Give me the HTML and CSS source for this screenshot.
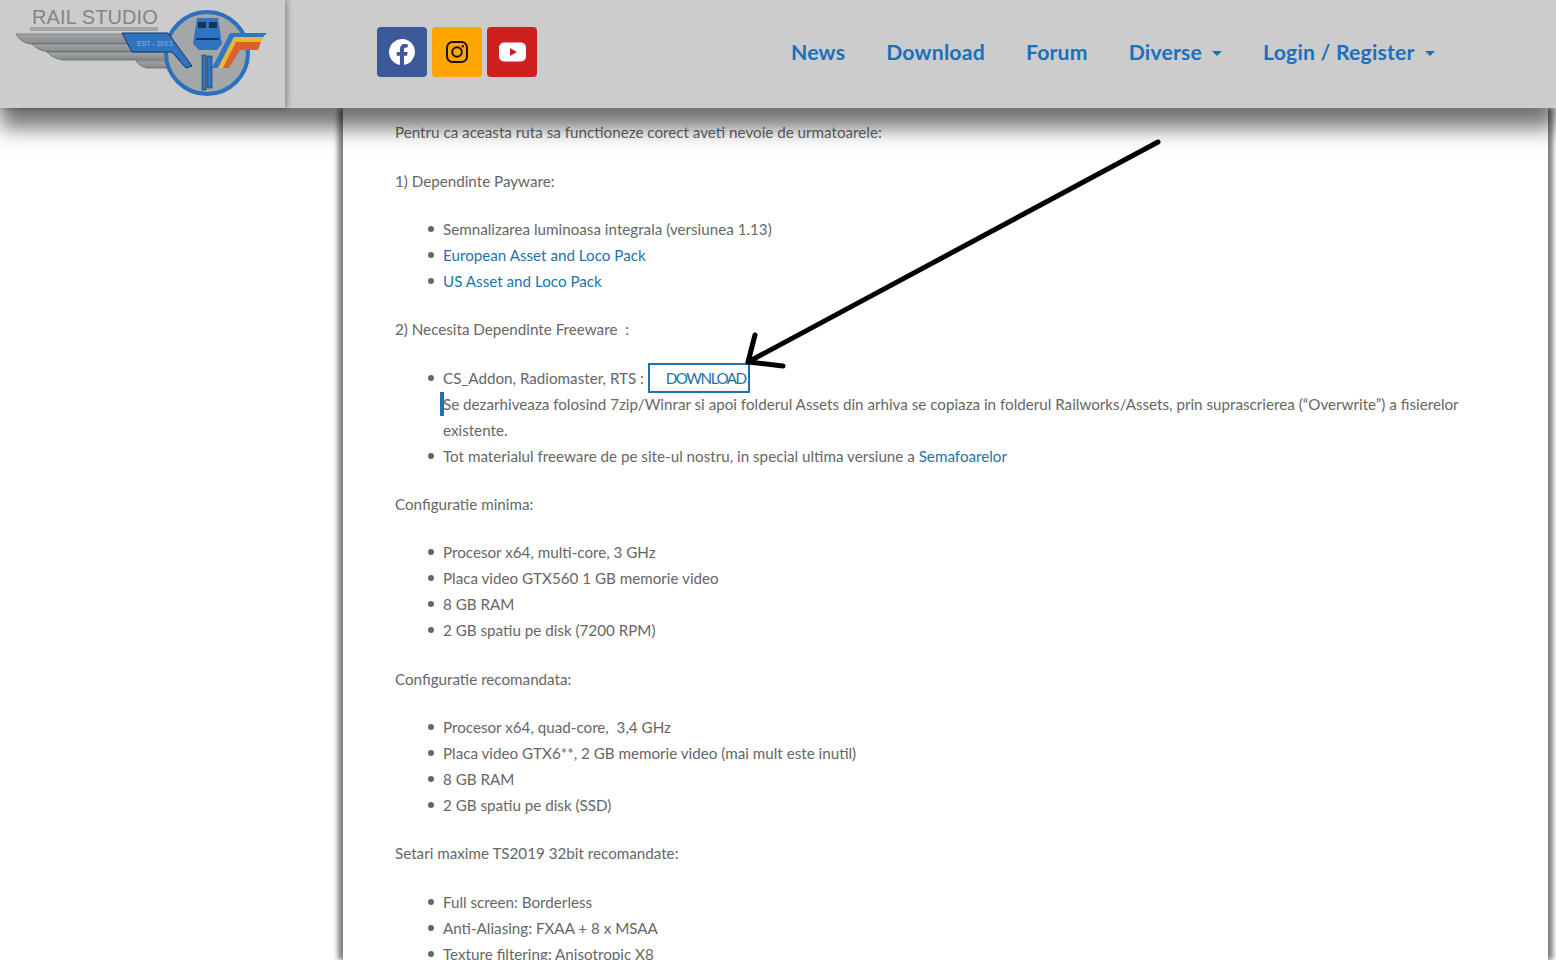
FILE: index.html
```html
<!DOCTYPE html>
<html lang="ro">
<head>
    <meta charset="UTF-8">
    <title>Rail Studio</title>
    <link rel="stylesheet" href="styles.css">
</head>
<body>
    <header class="topbar">
        <a class="logo" href="#">
            <svg width="285" height="108" viewBox="0 0 285 108">
                <defs>
                    <linearGradient id="steel" x1="0" y1="0" x2="0" y2="1">
                        <stop offset="0" stop-color="#a4a7a9"/>
                        <stop offset="1" stop-color="#84888a"/>
                    </linearGradient>
                </defs>
                <rect x="30" y="27" width="128" height="4" fill="#a6a6a6"/>
                <path d="M16 34 H126 L134 44 H30 Q20 42 16 34Z" fill="url(#steel)" stroke="#5b5b5b" stroke-width=".6"/>
                <path d="M32 44 H134 L138 52 H48 Q37 50 32 44Z" fill="url(#steel)" stroke="#5b5b5b" stroke-width=".6"/>
                <path d="M47 52 H172 L178 60 H62 Q52 58 47 52Z" fill="url(#steel)" stroke="#5b5b5b" stroke-width=".6"/>
                <path d="M136 61 H170 V68 H147 Q139 66 136 61Z" fill="url(#steel)" stroke="#5b5b5b" stroke-width=".6"/>
                <circle cx="207" cy="53" r="41" fill="#a4a7a8" stroke="#2a72bd" stroke-width="4"/>
                <path d="M230 33 H267 L263 37 H234 L221 62 L218 68 H212Z" fill="#2f77c6"/>
                <path d="M234 37 H264 L261 42 H236 L223 68 H218Z" fill="#e9b63c"/>
                <path d="M236 42 H261 L258 50 H240 L229 68 H223Z" fill="#dd5f2a"/>
                <path d="M122 33 H168 L192 66 L186 68 L172 52 H132Z" fill="#2f74c0" stroke="#17345c" stroke-width="1"/>
                <text x="137" y="46" class="logo-est">EST - 2013</text>
                <path d="M197 18 H218 L222 44 L217 50 H199 L193 44Z" fill="#2f74c0"/>
                <rect x="198" y="22" width="8" height="6" fill="#14345a"/>
                <rect x="209" y="22" width="8" height="6" fill="#14345a"/>
                <rect x="196" y="38" width="23" height="2" fill="#14345a"/>
                <rect x="202" y="55" width="4" height="35" fill="#2f74c0" stroke="#17345c" stroke-width=".6"/>
                <rect x="207" y="56" width="5" height="32" fill="#2f74c0" stroke="#17345c" stroke-width=".6"/>
            </svg>
            <span class="logo-text">RAIL STUDIO</span>
        </a>
        <div class="social">
            <a class="social-btn fb" href="#">
                <svg viewBox="0 0 24 24" width="26" height="26"><path fill="#fff" d="M24 12a12 12 0 1 0-13.900 11.900v-8.400H7.100V12h3V9.400c0-3 1.800-4.700 4.500-4.700 1.300 0 2.700.2 2.700.2v3h-1.500c-1.500 0-2 .9-2 1.900V12h3.400l-.5 3.500h-2.900v8.400A12 12 0 0 0 24 12z"/></svg>
            </a>
            <a class="social-btn ig" href="#">
                <svg viewBox="0 0 24 24" width="24" height="24" fill="none" stroke="#1a1206" stroke-width="2"><rect x="2" y="2" width="20" height="20" rx="5.500"/><circle cx="12" cy="12" r="4.800"/><circle cx="17.800" cy="6.200" r="1.200" fill="#1a1206" stroke="none"/></svg>
            </a>
            <a class="social-btn yt" href="#">
                <svg viewBox="0 0 27 20" width="27" height="20"><rect width="27" height="19" y=".5" rx="5" fill="#fff"/><path d="M11 6 L18 10 L11 14Z" fill="#c91d22"/></svg>
            </a>
        </div>
        <nav class="menu">
            <a href="#">News</a>
            <a href="#">Download</a>
            <a href="#">Forum</a>
            <a href="#" class="drop">Diverse</a>
            <a href="#" class="drop">Login / Register</a>
        </nav>
    </header>

    <main class="page">
        <article class="content">
            <p>Pentru ca aceasta ruta sa functioneze corect aveti nevoie de urmatoarele:</p>
            <p>1) Dependinte Payware:</p>
            <ul>
                <li>Semnalizarea luminoasa integrala (versiunea 1.13)</li>
                <li><a href="#">European Asset and Loco Pack</a></li>
                <li><a href="#">US Asset and Loco Pack</a></li>
            </ul>
            <p>2) Necesita Dependinte Freeware &nbsp;:</p>
            <ul>
                <li>CS_Addon, Radiomaster, RTS : <a href="#" class="dl-btn">DOWNLOAD</a><br>
                    <span class="marked">Se dezarhiveaza folosind 7zip/Winrar si apoi folderul Assets din arhiva se copiaza in folderul Railworks/Assets, prin suprascrierea (“Overwrite”) a fisierelor existente.</span></li>
                <li>Tot materialul freeware de pe site-ul nostru, in special ultima versiune a <a href="#">Semafoarelor</a></li>
            </ul>
            <p>Configuratie minima:</p>
            <ul>
                <li>Procesor x64, multi-core, 3 GHz</li>
                <li>Placa video GTX560 1 GB memorie video</li>
                <li>8 GB RAM</li>
                <li>2 GB spatiu pe disk (7200 RPM)</li>
            </ul>
            <p>Configuratie recomandata:</p>
            <ul>
                <li>Procesor x64, quad-core, &nbsp;3,4 GHz</li>
                <li>Placa video GTX6**, 2 GB memorie video (mai mult este inutil)</li>
                <li>8 GB RAM</li>
                <li>2 GB spatiu pe disk (SSD)</li>
            </ul>
            <p>Setari maxime TS2019 32bit recomandate:</p>
            <ul>
                <li>Full screen: Borderless</li>
                <li>Anti-Aliasing: FXAA + 8 x MSAA</li>
                <li>Texture filtering: Anisotropic X8</li>
            </ul>
        </article>
    </main>

    <svg class="arrow" width="1556" height="960" viewBox="0 0 1556 960">
        <path d="M1158 142 L748 362 M755 335 L748 362 L783 366" fill="none" stroke="#000" stroke-width="5" stroke-linecap="round" stroke-linejoin="round"/>
    </svg>
</body>
</html>
```

FILE: styles.css
```css
html, body {
    height: 960px;
    overflow: hidden;
}
body {
    margin: 0;
    font-family: "Lato", "Noto Sans", sans-serif;
    font-size: 15.2px;
    color: #666;
    background: #fff;
}
a {
    text-decoration: none;
}
.topbar {
    position: relative;
    z-index: 2;
    box-sizing: border-box;
    height: 108px;
    padding-bottom: 4px;
    background: #ccc;
    display: flex;
    align-items: center;
    box-shadow: 0 20px 20px rgba(0, 0, 0, 0.55);
}
.logo {
    position: relative;
    flex: none;
    align-self: flex-start;
    width: 285px;
    height: 108px;
    box-shadow: 2px 0 6px rgba(0, 0, 0, 0.35);
}
.logo-text {
    position: absolute;
    left: 32px;
    top: 6px;
    font-family: "Liberation Sans", sans-serif;
    font-size: 20px;
    letter-spacing: .1px;
    color: #858585;
    white-space: nowrap;
}
.logo-est {
    font-family: "Liberation Sans", sans-serif;
    font-size: 7px;
    fill: #8fb4dc;
}
.social {
    display: flex;
    gap: 5px;
    margin-left: 92px;
}
.social-btn {
    width: 50px;
    height: 50px;
    border-radius: 4px;
    display: flex;
    align-items: center;
    justify-content: center;
}
.fb { background: #3b5998; }
.ig { background: #ffa500; }
.yt { background: #cd201f; }
.menu {
    display: flex;
    gap: 41px;
    margin-left: 254px;
}
.menu a {
    font-size: 21.2px;
    font-weight: 700;
    letter-spacing: .2px;
    color: #1a70bd;
}
.drop::after {
    content: "";
    display: inline-block;
    margin-left: 10px;
    vertical-align: 4px;
    border-top: 5px solid #1a70bd;
    border-left: 5px solid transparent;
    border-right: 5px solid transparent;
}
.page {
    width: 1205px;
    height: 852px;
    margin-left: 343px;
    background: #fff;
    box-shadow: -5px 0 5px rgba(0, 0, 0, 0.5), 5px 0 5px rgba(0, 0, 0, 0.5);
}
.content {
    padding: 11.300px 52px 0;
    line-height: 26px;
}
.content p {
    margin: 0 0 22.350px;
}
.content ul {
    margin: 0 0 22.350px;
    padding-left: 48px;
    list-style: none;
}
.content li {
    position: relative;
}
.content li::before {
    content: "";
    position: absolute;
    left: -15px;
    top: 10px;
    width: 6px;
    height: 6px;
    border-radius: 50%;
    background: #666;
}
.content a {
    color: #1e73a8;
}
.content .dl-btn {
    padding: 4px 2px 4px 16px;
    border: 2px solid #1e73a8;
    letter-spacing: -1.500px;
}
.marked::before {
    content: "";
    position: absolute;
    width: 4px;
    height: 24px;
    margin: 1px 0 0 -3px;
    background: #1e73a8;
}
.arrow {
    position: absolute;
    left: 0;
    top: 0;
    z-index: 3;
    pointer-events: none;
}
```
